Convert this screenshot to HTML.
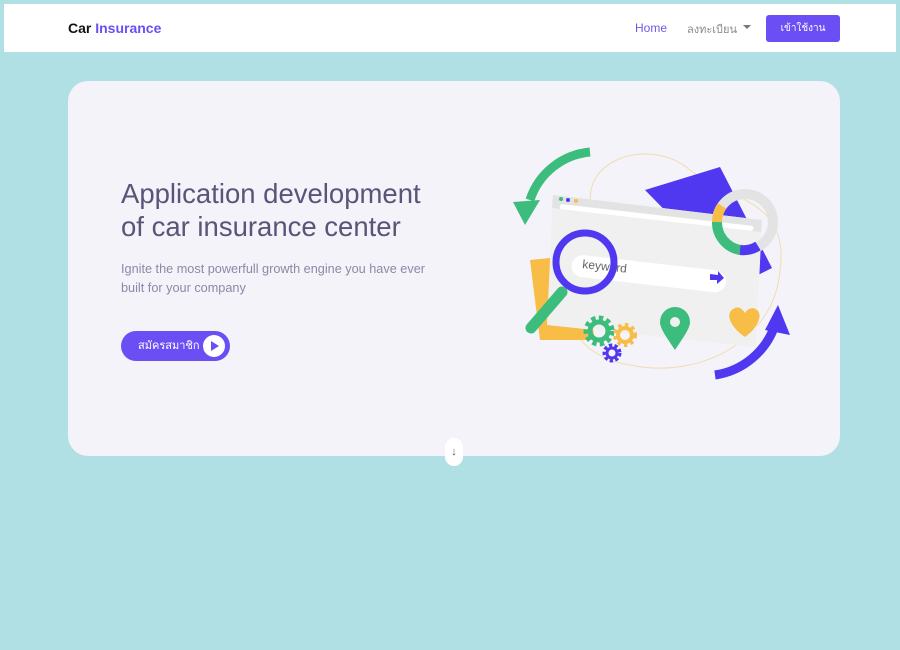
<!DOCTYPE html>
<html><head><meta charset="utf-8"><style>
*{margin:0;padding:0;box-sizing:border-box}
body{width:900px;height:650px;background:#b0dfe4;font-family:"Liberation Sans",sans-serif;position:relative;overflow:hidden}
.nav{position:absolute;left:4px;top:4px;width:892px;height:48px;background:#fff}
.logo{position:absolute;left:64px;top:16px;font-size:14px;font-weight:bold;color:#111}
.logo span{color:#6c4ef5}
.home{position:absolute;left:631px;top:17px;font-size:12px;color:#6c5ce7}
.reg{position:absolute;left:683px;top:16px;font-size:11px;color:#888;white-space:nowrap}
.reg:after{content:"";display:inline-block;margin-left:6px;border:4px solid transparent;border-top:4px solid #777;vertical-align:0}
.login{position:absolute;left:762px;top:11px;width:74px;height:27px;background:#6c4ef5;border-radius:3px;color:#fff;font-size:10px;text-align:center;line-height:27px}
.card{position:absolute;left:68px;top:81px;width:772px;height:375px;background:#f4f3fa;border-radius:20px}
h1{position:absolute;left:121px;top:177px;font-size:27.5px;font-weight:normal;color:#5a5478;line-height:33px}
p{position:absolute;left:121px;top:260px;font-size:12.7px;color:#8d88a5;line-height:19px}
.btn{position:absolute;left:121px;top:331px;width:109px;height:30px;background:#6c4ef5;border-radius:15px;color:#fff;font-size:11px;line-height:30px;padding-left:17px;white-space:nowrap}
.btn i{position:absolute;right:5px;top:4px;width:22px;height:22px;background:#fff;border-radius:50%}
.btn i:after{content:"";position:absolute;left:8px;top:6px;border:5px solid transparent;border-left:8px solid #6c4ef5;border-right:0}
.down{position:absolute;left:445px;top:438px;width:18px;height:28px;background:#fff;border-radius:9px;text-align:center;color:#555;font-size:11px;line-height:28px}
</style></head><body>
<div class="nav"><div class="logo">Car <span>Insurance</span></div>
<div class="home">Home</div><div class="reg">ลงทะเบียน</div><div class="login">เข้าใช้งาน</div></div>
<div class="card"></div>
<h1>Application development<br>of car insurance center</h1>
<p>Ignite the most powerfull growth engine you have ever<br>built for your company</p>
<div class="btn">สมัครสมาชิก<i></i></div>
<div class="down">↓</div>
<svg style="position:absolute;left:500px;top:140px" width="300" height="250" viewBox="0 0 300 250">
<path d="M95 80 C70 20 150 -5 190 30 C230 60 290 60 280 130 C275 200 200 240 130 225 C70 215 60 170 90 150 C40 130 60 90 95 80Z" fill="none" stroke="#f2dcb0" stroke-width="1"/>
<path d="M145 50 L220 27 L272 128 L238 145Z" fill="#5038f0"/>
<path d="M30 120 L80 115 L95 200 L40 200Z" fill="#f7bd46"/>
<path d="M53 55 L262 80 L256 207 L47 185Z" fill="#f0f0f0"/>
<path d="M53 55 L262 80 L261 92 L52 68Z" fill="#e3e3e3"/>
<rect x="60" y="64" width="195" height="5" rx="2.5" fill="#fff" transform="rotate(6.5 60 64)"/>
<circle cx="61" cy="59" r="2" fill="#3dbd7d"/><circle cx="68" cy="60" r="2" fill="#5038f0"/><circle cx="76" cy="61" r="2" fill="#f7bd46"/>
<rect x="73" y="114" width="155" height="22" rx="11" fill="#fff" transform="rotate(6.5 73 114)"/>
<text x="82" y="128" font-size="12" fill="#666" font-family="Liberation Sans" transform="rotate(6 82 128)">keyword</text>
<path d="M210 134 L218 135 L218 131 L224 138 L217 144 L217 140 L210 140Z" fill="#5038f0"/>
<path d="M62 152 L31 188" stroke="#3dbd7d" stroke-width="11" stroke-linecap="round"/>
<circle cx="85" cy="122" r="29" fill="none" stroke="#5038f0" stroke-width="7"/>
<circle cx="245" cy="82" r="28" fill="none" stroke="#e3e3e3" stroke-width="10"/>
<path d="M217 82 A28 28 0 0 1 222 66" fill="none" stroke="#f7bd46" stroke-width="10"/>
<path d="M217 82 A28 28 0 0 0 240 110" fill="none" stroke="#3dbd7d" stroke-width="10"/>
<path d="M240 110 A28 28 0 0 0 258 106" fill="none" stroke="#5038f0" stroke-width="10"/>
<path d="M90 12 A70 70 0 0 0 30 60" fill="none" stroke="#3dbd7d" stroke-width="9"/>
<path d="M13 62 L40 60 L25 85Z" fill="#3dbd7d"/>
<path d="M215 235 A75 75 0 0 0 275 185" fill="none" stroke="#5038f0" stroke-width="9"/>
<path d="M265 190 L278 165 L290 195Z" fill="#5038f0"/>
<path d="M245 197 C228 185 225 172 235 168 C240 166 243 170 245 173 C248 168 254 166 258 171 C263 178 255 190 245 197Z" fill="#f7bd46"/>
<path d="M175 210 C165 195 160 188 160 182 A15 15 0 0 1 190 182 C190 188 185 195 175 210Z" fill="#3dbd7d"/><circle cx="175" cy="182" r="5" fill="#f0f0f0"/>
<circle cx="99" cy="191" r="12" fill="none" stroke="#3dbd7d" stroke-width="7" stroke-dasharray="4 3"/><circle cx="99" cy="191" r="9" fill="none" stroke="#3dbd7d" stroke-width="5"/>
<circle cx="125" cy="195" r="9" fill="none" stroke="#f7bd46" stroke-width="6" stroke-dasharray="3 3"/><circle cx="125" cy="195" r="7" fill="none" stroke="#f7bd46" stroke-width="4"/>
<circle cx="112" cy="213" r="7" fill="none" stroke="#5038f0" stroke-width="5" stroke-dasharray="3 2"/><circle cx="112" cy="213" r="5" fill="none" stroke="#5038f0" stroke-width="3"/>
</svg>
</body></html>
